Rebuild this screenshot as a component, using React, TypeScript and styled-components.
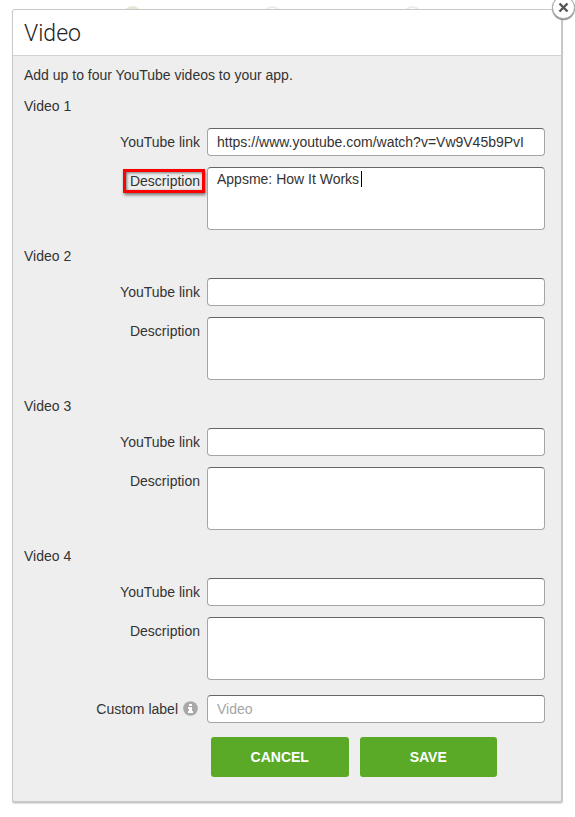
import React from "react";
import styled, { createGlobalStyle } from "styled-components";

const GlobalStyle = createGlobalStyle`
  *, *::before, *::after { box-sizing: border-box; }
  body {
    margin: 0;
    background: #fff;
    color: #333;
    font: 14px/20px "Liberation Sans", Arial, sans-serif;
  }
`;

const Page = styled.div`
  padding: 0 12px 15px;
`;

const Steps = styled.div`
  display: flex;
  gap: 121px;
  height: 9px;
  padding: 6px 0 0 111px;
  overflow: hidden;
`;

const Step = styled.span<{ $active?: boolean }>`
  flex: none;
  width: 19px;
  height: 19px;
  border: 2px solid ${(p) => (p.$active ? "#e2ebda" : "#ececec")};
  border-radius: 50%;
  background: ${(p) => (p.$active ? "#e2ebda" : "#fff")};
`;

const Dialog = styled.form`
  position: relative;
  border: 1px solid #c8c8c8;
  border-width: 1px 2px 2px 1px;
  border-radius: 3px;
  background: #eee;
  box-shadow: 0 1px 1px #ddd;
`;

const Header = styled.header`
  padding: 9px 11px 7px;
  border-bottom: 1px solid #d2d2d2;
  border-radius: 2px 2px 0 0;
  background: #fff;
`;

const Title = styled.h1`
  margin: 0;
  color: #222;
  font: 300 23px/29px Roboto, sans-serif;
`;

const CloseButton = styled.button`
  position: absolute;
  top: -14px;
  right: -14px;
  display: grid;
  place-items: center;
  width: 23px;
  height: 23px;
  padding: 0;
  border: 1px solid #aaa;
  border-radius: 50%;
  background: #fff;
  box-shadow: 0 1px 1px #888;
`;

const Body = styled.div`
  padding: 9px 16px 24px 11px;
`;

const Intro = styled.p`
  margin: 0 0 11px;
`;

const VideoGroup = styled.fieldset`
  display: grid;
  gap: 11px;
  min-width: 0;
  margin: 0 0 16px;
  padding: 0;
  border: 0;

  &:last-of-type { margin-bottom: 15px; }
`;

const GroupTitle = styled.legend`
  height: 32px;
  padding: 0;
`;

const Row = styled.div`
  display: grid;
  grid-template-columns: 176px 1fr;
  column-gap: 7px;
`;

const LabelCell = styled.div`
  display: flex;
  justify-content: flex-end;
  align-items: flex-start;
  gap: 5px;
  padding-top: 4px;
`;

const Label = styled.label<{ $marked?: boolean }>`
  ${(p) =>
    p.$marked &&
    `
    margin: -2px -5px 0 0;
    padding: 0 2px 0 4px;
    border: 3px solid #f00;
    box-shadow: 1px 2px 3px #777, inset 1px 1px 3px #777;
    line-height: 18px;
  `}
`;

const TextInput = styled.input`
  width: 100%;
  height: 28px;
  padding: 0 16px 0 9px;
  border: 1px solid #a5a5a5;
  border-top-color: #666;
  border-radius: 4px;
  outline: 0;
  background: #fff;
  color: #333;
  font: inherit;

  &::placeholder { color: #a5a5a5; opacity: 1; }
`;

const TextAreaFrame = styled.div`
  position: relative;
`;

const TextArea = styled.textarea`
  display: block;
  width: 100%;
  height: 63px;
  padding: 1px 9px;
  border: 1px solid #a5a5a5;
  border-top-color: #666;
  border-radius: 4px;
  outline: 0;
  background: #fff;
  color: #333;
  caret-color: transparent;
  font: inherit;
  resize: none;
`;

const Caret = styled.span`
  position: absolute;
  top: 4px;
  left: 154px;
  width: 1px;
  height: 16px;
  background: #000;
  pointer-events: none;
`;

const InfoButton = styled.button`
  display: block;
  margin: 2px 2px 0 0;
  padding: 0;
  border: 0;
  background: none;
  line-height: 0;
`;

const Actions = styled.div`
  display: grid;
  grid-template-columns: 1fr 1fr;
  gap: 11px;
  margin: 14px 48px 0 187px;
`;

const ActionButton = styled.button`
  height: 40px;
  padding: 0;
  border: 0;
  border-radius: 3px;
  background: #5aaa28;
  color: #fff;
  font: bold 14px/20px "Liberation Sans", Arial, sans-serif;
`;

const videos = [
  { link: "https://www.youtube.com/watch?v=Vw9V45b9PvI", description: "Appsme: How It Works" },
  { link: "", description: "" },
  { link: "", description: "" },
  { link: "", description: "" },
];

function CloseIcon() {
  return (
    <svg width="11" height="11" viewBox="0 0 11 11" aria-hidden="true">
      <path d="M1.5 1.5 9.5 9.5M9.5 1.5 1.5 9.5" stroke="#555" strokeWidth="2.4" />
    </svg>
  );
}

function InfoIcon() {
  return (
    <svg width="15" height="15" viewBox="0 0 15 15" aria-hidden="true">
      <circle cx="7.5" cy="7.5" r="7.3" fill="#a8a8a8" />
      <path d="M6 3h3v2H6zM5 6h4v4h1v2H5v-2h1V8H5z" fill="#fff" />
    </svg>
  );
}

interface VideoFieldsProps {
  index: number;
  link: string;
  description: string;
}

function VideoFields({ index, link, description }: VideoFieldsProps) {
  const active = index === 1;

  return (
    <VideoGroup>
      <GroupTitle>Video {index}</GroupTitle>
      <Row>
        <LabelCell>
          <Label htmlFor={`link-${index}`}>YouTube link</Label>
        </LabelCell>
        <TextInput id={`link-${index}`} defaultValue={link} spellCheck={false} />
      </Row>
      <Row>
        <LabelCell>
          <Label htmlFor={`description-${index}`} $marked={active}>Description</Label>
        </LabelCell>
        <TextAreaFrame>
          <TextArea
            id={`description-${index}`}
            defaultValue={description}
            spellCheck={false}
          />
          {active && <Caret aria-hidden="true" />}
        </TextAreaFrame>
      </Row>
    </VideoGroup>
  );
}

export default function App() {
  return (
    <>
      <GlobalStyle />
      <Page>
        <Steps aria-hidden="true">
          <Step $active />
          <Step />
          <Step />
        </Steps>
        <Dialog role="dialog" aria-labelledby="dialog-title" onSubmit={(e) => e.preventDefault()}>
          <Header>
            <Title id="dialog-title">Video</Title>
          </Header>
          <Body>
            <Intro>Add up to four YouTube videos to your app.</Intro>
            {videos.map((video, i) => (
              <VideoFields key={i} index={i + 1} {...video} />
            ))}
            <Row>
              <LabelCell>
                <Label htmlFor="custom-label">Custom label</Label>
                <InfoButton type="button" aria-label="About the custom label">
                  <InfoIcon />
                </InfoButton>
              </LabelCell>
              <TextInput id="custom-label" placeholder="Video" />
            </Row>
            <Actions>
              <ActionButton type="button">CANCEL</ActionButton>
              <ActionButton type="submit">SAVE</ActionButton>
            </Actions>
          </Body>
          <CloseButton type="button" aria-label="Close">
            <CloseIcon />
          </CloseButton>
        </Dialog>
      </Page>
    </>
  );
}
